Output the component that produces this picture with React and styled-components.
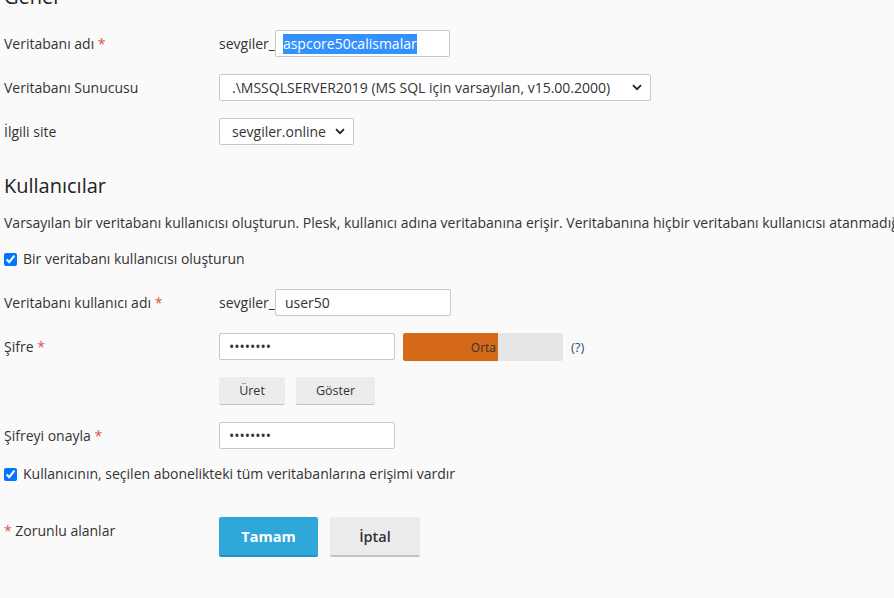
import React from 'react';
import styled, { createGlobalStyle } from 'styled-components';

const GlobalStyle = createGlobalStyle`
  html, body {
    margin: 0;
    padding: 0;
    background: #fafafa;
    overflow: hidden;
  }
  body {
    font-family: "Open Sans", "Liberation Sans", sans-serif;
    font-size: 14px;
    color: #333;
  }
`;

const Page = styled.div`
  padding: 0 0 0 4px;
  width: 890px;
  height: 598px;
  overflow: hidden;
`;

const SectionTitle = styled.h3`
  margin: ${(props) => props.margin || '0'};
  font-size: 20px;
  line-height: 24px;
  font-weight: 400;
  color: #222;
`;

const Row = styled.div`
  display: grid;
  grid-template-columns: 215px 1fr;
  align-items: ${(props) => (props.top ? 'start' : 'center')};
  margin-bottom: ${(props) => (props.gap === undefined ? 17 : props.gap)}px;
  min-height: 27px;
`;

const Label = styled.div`
  line-height: 20px;
  padding-top: ${(props) => props.pt || 0}px;
`;

const Star = styled.span`
  color: #d9534f;
`;

const Field = styled.div`
  display: flex;
  align-items: ${(props) => (props.top ? 'flex-start' : 'center')};
  gap: ${(props) => props.gap || 0}px;
`;

const Prefix = styled.span`
  line-height: 20px;
`;

const FakeInput = styled.div`
  box-sizing: border-box;
  width: ${(props) => props.width}px;
  height: 27px;
  background: #fff;
  border: 1px solid #c8c8c8;
  border-radius: 2px;
  padding: 0 7px;
  display: flex;
  align-items: center;
  line-height: 20px;
`;

const Selected = styled.span`
  background: #3390ff;
  color: #fff;
`;

const TextInput = styled.input`
  box-sizing: border-box;
  width: ${(props) => props.width}px;
  height: 27px;
  background: #fff;
  border: 1px solid #c8c8c8;
  border-radius: 2px;
  padding: 0 9px;
  font-family: inherit;
  font-size: 14px;
  color: #333;
  outline: none;
  margin: 0;
`;

const SelectBox = styled.div`
  box-sizing: border-box;
  width: ${(props) => props.width}px;
  height: 27px;
  background: #fff;
  border: 1px solid #c8c8c8;
  border-radius: 2px;
  padding: 0 8px 0 12px;
  display: flex;
  align-items: center;
  justify-content: space-between;
  line-height: 20px;
  white-space: nowrap;
`;

const Chevron = () => (
  <svg width="10" height="7" viewBox="0 0 10 7">
    <path d="M1 1.2 L5 5.2 L9 1.2" fill="none" stroke="#222" strokeWidth="1.8" />
  </svg>
);

const Description = styled.p`
  margin: 15px 0 16px;
  line-height: 20px;
  white-space: nowrap;
`;

const CheckRow = styled.label`
  display: flex;
  align-items: center;
  gap: 6px;
  height: 20px;
  line-height: 20px;
  margin-bottom: ${(props) => props.gap || 0}px;

  input {
    margin: 0;
    width: 13px;
    height: 13px;
    accent-color: #0075ff;
  }
`;

const Strength = styled.div`
  width: 160px;
  height: 28px;
  background: #e6e6e6;
  border-radius: 2px;
  overflow: hidden;
  display: flex;
  margin-left: 8px;
`;

const StrengthFill = styled.div`
  height: 100%;
  background: #d5691a;
  display: flex;
  align-items: center;
  justify-content: flex-end;
  padding-right: 2px;
  box-sizing: border-box;
  font-size: 12px;
  color: #333;
`;

const Help = styled.span`
  margin-left: 8px;
  align-self: center;
  font-size: 13px;
  color: #2b4f73;
`;

const SmallButton = styled.button`
  box-sizing: border-box;
  width: ${(props) => props.width}px;
  height: 28px;
  border: none;
  border-bottom: 1px solid #c3c3c3;
  border-radius: 2px;
  background: #ececec;
  font-family: inherit;
  font-size: 12.5px;
  color: #333;
  padding: 0;
`;

const Button = styled.button`
  box-sizing: border-box;
  width: ${(props) => props.width}px;
  height: 40px;
  border: none;
  border-bottom: 2px solid ${(props) => (props.primary ? '#2590c2' : '#c3c3c3')};
  border-radius: 2px;
  background: ${(props) => (props.primary ? '#2ea7db' : '#ececec')};
  color: ${(props) => (props.primary ? '#fff' : '#333')};
  font-family: inherit;
  font-size: 14.5px;
  font-weight: ${(props) => (props.primary ? 700 : 600)};
  padding: 0;
`;

export default function App() {
  const strength = 95;
  return (
    <Page>
      <GlobalStyle />
      <SectionTitle margin="-15px 0 21px">Genel</SectionTitle>

      <Row>
        <Label>Veritabanı adı <Star>*</Star></Label>
        <Field>
          <Prefix>sevgiler_</Prefix>
          <FakeInput width={175}>
            <Selected>aspcore50calismalar</Selected>
          </FakeInput>
        </Field>
      </Row>

      <Row>
        <Label>Veritabanı Sunucusu</Label>
        <Field>
          <SelectBox width={432}>
            <span>.\MSSQLSERVER2019 (MS SQL için varsayılan, v15.00.2000)</span>
            <Chevron />
          </SelectBox>
        </Field>
      </Row>

      <Row gap={0}>
        <Label>İlgili site</Label>
        <Field>
          <SelectBox width={135}>
            <span>sevgiler.online</span>
            <Chevron />
          </SelectBox>
        </Field>
      </Row>

      <SectionTitle margin="29px 0 0">Kullanıcılar</SectionTitle>
      <Description>
        Varsayılan bir veritabanı kullanıcısı oluşturun. Plesk, kullanıcı adına veritabanına erişir. Veritabanına hiçbir veritabanı kullanıcısı atanmadığında Plesk bu kullanıcıyı kullanır.
      </Description>

      <CheckRow gap={20}>
        <input type="checkbox" defaultChecked />
        <span>Bir veritabanı kullanıcısı oluşturun</span>
      </CheckRow>

      <Row>
        <Label>Veritabanı kullanıcı adı <Star>*</Star></Label>
        <Field>
          <Prefix>sevgiler_</Prefix>
          <TextInput width={176} defaultValue="user50" />
        </Field>
      </Row>

      <Row gap={16}>
        <Label>Şifre <Star>*</Star></Label>
        <Field top>
          <TextInput width={176} type="password" defaultValue="12345678" />
          <Strength>
            <StrengthFill style={{ width: `${strength}px` }}>Orta</StrengthFill>
          </Strength>
          <Help>(?)</Help>
        </Field>
      </Row>

      <Row>
        <span />
        <Field gap={11}>
          <SmallButton width={66}>Üret</SmallButton>
          <SmallButton width={79}>Göster</SmallButton>
        </Field>
      </Row>

      <Row gap={15}>
        <Label>Şifreyi onayla <Star>*</Star></Label>
        <Field>
          <TextInput width={176} type="password" defaultValue="12345678" />
        </Field>
      </Row>

      <CheckRow gap={33}>
        <input type="checkbox" defaultChecked />
        <span>Kullanıcının, seçilen abonelikteki tüm veritabanlarına erişimi vardır</span>
      </CheckRow>

      <Row top>
        <Label pt={4}><Star>*</Star> Zorunlu alanlar</Label>
        <Field gap={12}>
          <Button primary width={99}>Tamam</Button>
          <Button width={90}>İptal</Button>
        </Field>
      </Row>
    </Page>
  );
}
